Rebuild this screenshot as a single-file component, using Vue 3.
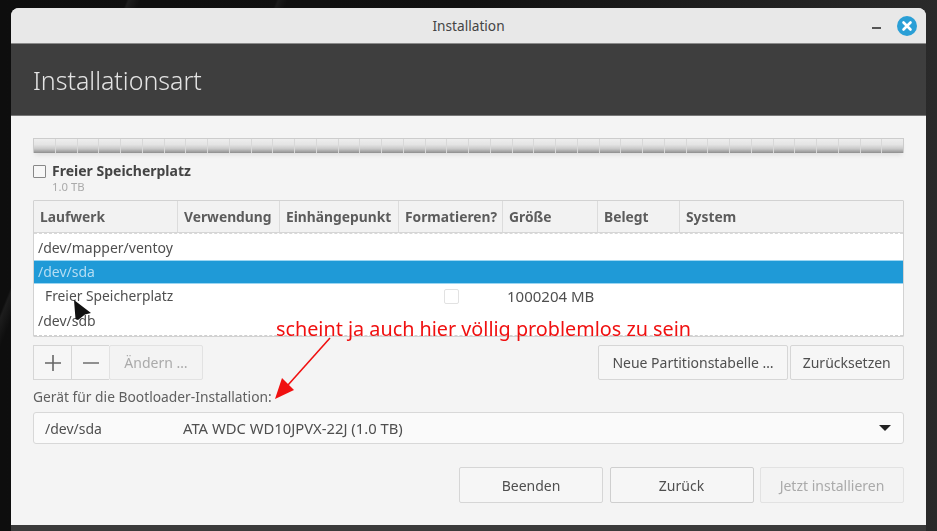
<script setup>
const cols = ['Laufwerk', 'Verwendung', 'Einhängepunkt', 'Formatieren?', 'Größe', 'Belegt', 'System']
const ticks = Array.from({ length: 40 }, (_, i) => i)
</script>

<template>
  <div class="screen">
    <div class="window">
      <header class="titlebar">
        <span class="title">Installation</span>
        <span class="minimize"></span>
        <svg class="close" viewBox="0 0 20 20" width="20" height="20">
          <circle cx="10" cy="10" r="10" fill="#2a9fd6" />
          <path d="M6.5 6.5l7 7M13.5 6.5l-7 7" stroke="#fff" stroke-width="2.6" stroke-linecap="round" />
        </svg>
      </header>
      <div class="banner">Installationsart</div>
      <main class="content">
        <div class="bar">
          <span v-for="t in ticks" :key="t" class="tick"></span>
        </div>
        <div class="legend">
          <span class="legend-box"></span>
          <div>
            <div class="legend-name">Freier Speicherplatz</div>
            <div class="legend-size">1.0 TB</div>
          </div>
        </div>
        <section class="table">
          <div class="thead">
            <div v-for="c in cols" :key="c" class="th">{{ c }}</div>
          </div>
          <div class="tbody">
            <div class="row first">/dev/mapper/ventoy</div>
            <div class="row selected">/dev/sda</div>
            <div class="row partition">
              <span class="part-name">Freier Speicherplatz</span>
              <span class="part-check"><i></i></span>
              <span class="part-size">1000204 MB</span>
            </div>
            <div class="row last">/dev/sdb</div>
          </div>
        </section>
        <div class="tools">
          <div class="group">
            <button class="btn icon">
              <svg viewBox="0 0 16 16" width="16" height="16"><path d="M8 0v16M0 8h16" stroke="#666" stroke-width="1.6" /></svg>
            </button>
            <button class="btn icon">
              <svg viewBox="0 0 16 16" width="16" height="16"><path d="M0 8h16" stroke="#777" stroke-width="1.6" /></svg>
            </button>
            <button class="btn change" disabled>Ändern …</button>
          </div>
          <div class="group right">
            <button class="btn table-new">Neue Partitionstabelle …</button>
            <button class="btn reset">Zurücksetzen</button>
          </div>
        </div>
        <div class="boot-label">Gerät für die Bootloader-Installation:</div>
        <div class="combo">
          <span class="combo-dev">/dev/sda</span>
          <span class="combo-name">ATA WDC WD10JPVX-22J (1.0 TB)</span>
          <span class="caret"></span>
        </div>
        <footer class="actions">
          <button class="btn act">Beenden</button>
          <button class="btn act back">Zurück</button>
          <button class="btn act" disabled>Jetzt installieren</button>
        </footer>
      </main>
    </div>

    <div class="note">scheint ja auch hier völlig problemlos zu sein</div>
    <svg class="arrow" viewBox="0 0 937 531" width="937" height="531">
      <path d="M330 338L288 385" stroke="#f01010" stroke-width="1.6" fill="none" />
      <path d="M275 399L282 378L294 390Z" fill="#f01010" />
    </svg>
    <svg class="cursor" viewBox="0 0 18 22" width="18" height="22">
      <path d="M0 0L17 13L11 14.5L4 20L1.5 19Z" fill="#111" />
    </svg>
  </div>
</template>

<style>
html, body { margin: 0; background: #111; }
</style>

<style scoped>
.screen {
  position: relative;
  width: 937px;
  height: 531px;
  overflow: hidden;
  box-sizing: border-box;
  padding: 8px 11px 0;
  background:
    linear-gradient(112deg, transparent 11%, #1d1d1d 11.2%, transparent 12.2%),
    linear-gradient(112deg, transparent 24%, #1a1a1a 24.2%, transparent 25%),
    linear-gradient(90deg, #0e0e0e 0%, #111 50%, #2a2a2a 100%);
  font-family: "Noto Sans", "Open Sans", sans-serif;
  font-size: 14px;
  color: #4f4f4f;
}
.window {
  width: 915px;
  height: 517px;
  border-radius: 8px 8px 0 0;
  overflow: hidden;
  background: #f4f4f4;
  display: flex;
  flex-direction: column;
  box-shadow: 0 2px 0 #3a3a3a, 0 8px 0 #3a3a3a;
  filter: blur(0.35px);
}
.titlebar {
  position: relative;
  height: 36px;
  flex: none;
  box-sizing: border-box;
  background: #e8e8e8;
  border-bottom: 1px solid #8a8a8a;
  display: flex;
  align-items: center;
  justify-content: center;
}
.title { font-size: 13.7px; color: #444; }
.minimize {
  position: absolute;
  left: 861px;
  top: 19px;
  width: 9px;
  height: 2px;
  background: #555;
}
.close { position: absolute; left: 886px; top: 8px; }
.banner {
  height: 72px;
  flex: none;
  box-sizing: border-box;
  background: #3e3e3e;
  border-bottom: 1px solid #777;
  color: #e4e4e4;
  font-size: 25px;
  font-weight: 300;
  padding: 19px 0 0 22px;
  line-height: 34px;
}
.content {
  flex: 1;
  padding: 22px 22px 0;
  display: flex;
  flex-direction: column;
}
.bar {
  height: 15px;
  box-sizing: border-box;
  display: flex;
  border: 1px solid #ccc;
  border-bottom: 0;
  background: linear-gradient(#eeeeee 0%, #e4e4e4 40%, #c8c8c8 70%, #8e8e8e 100%);
  box-shadow: 0 4px 4px -2px #ddd;
}
.tick { flex: 1; border-right: 1px solid #d8d8d8; }
.tick:last-child { border-right: 0; }
.legend {
  display: flex;
  gap: 6px;
  margin-top: 10px;
  height: 36px;
}
.legend-box {
  width: 11px;
  height: 11px;
  margin-top: 2px;
  border: 1px solid #888;
  border-radius: 1px;
  background: #f7f7f7;
}
.legend-name {
  font-weight: 700;
  font-size: 14px;
  line-height: 16px;
  color: #444;
}
.legend-size {
  font-size: 11.3px;
  line-height: 14px;
  margin-top: 1px;
  color: #aaa;
}
.table {
  height: 137px;
  margin-top: 1px;
  box-sizing: border-box;
  border: 1px solid #d2d2d2;
  border-radius: 1px;
  background: #fff;
  display: flex;
  flex-direction: column;
}
.thead {
  height: 32px;
  flex: none;
  box-sizing: border-box;
  display: grid;
  grid-template-columns: 144px 102px 119px 104px 95px 82px 1fr;
  background: #f2f2f2;
  border-bottom: 1px solid #d6d6d6;
}
.th {
  padding-left: 6px;
  line-height: 31px;
  font-weight: 700;
  font-size: 13.8px;
  color: #5c5c5c;
  border-right: 1px solid #dcdcdc;
  white-space: nowrap;
}
.th:last-child { border-right: 0; }
.tbody {
  flex: 1;
  min-height: 0;
  border-top: 1px dashed #d8d8d8;
  border-bottom: 1px dashed #d0d0d0;
}
.row {
  height: 24.5px;
  line-height: 24px;
  padding-left: 4px;
  box-sizing: border-box;
}
.first { height: 26px; line-height: 27px; }
.selected {
  height: 24px;
  line-height: 22px;
  background: #1f9ad7;
  color: #b4ddf3;
  border-top: 1px solid #9cd6f2;
  border-bottom: 1px solid #9cd6f2;
}
.partition {
  display: flex;
  align-items: center;
  padding-left: 11px;
}
.part-name { width: 399px; flex: none; font-size: 13.8px; }
.part-check { width: 63px; flex: none; }
.part-check i {
  display: block;
  width: 13px;
  height: 13px;
  border: 1px solid #e2e2e2;
  border-radius: 2px;
}
.part-size { font-size: 15px; }
.tools {
  display: flex;
  justify-content: space-between;
  margin-top: 8px;
  height: 35px;
}
.group { display: flex; }
.right { gap: 1.5px; }
.btn {
  font: inherit;
  color: #4f4f4f;
  background: #f6f6f6;
  border: 1px solid #d6d6d6;
  border-radius: 2px;
  padding: 0;
  display: flex;
  align-items: center;
  justify-content: center;
}
.btn:disabled { color: #aaa; background: #f3f3f3; border-color: #e2e2e2; }
.icon { width: 38px; border-radius: 0; border-right: 0; }
.change { width: 94px; }
.table-new { width: 190px; }
.reset { width: 114.5px; }
.boot-label {
  margin-top: 7px;
  line-height: 19px;
  font-size: 13.8px;
  color: #5f5f5f;
}
.combo {
  height: 32px;
  margin-top: 6px;
  box-sizing: border-box;
  border: 1px solid #d8d8d8;
  border-radius: 3px;
  background: #fafafa;
  display: flex;
  align-items: center;
  padding-left: 11px;
}
.combo-dev { width: 138px; }
.combo-name { flex: 1; font-size: 14.8px; }
.caret {
  width: 0;
  height: 0;
  margin-right: 12px;
  border: 6px solid transparent;
  border-top: 6px solid #222;
  border-bottom: 0;
}
.actions {
  display: flex;
  justify-content: flex-end;
  gap: 6.5px;
  margin-top: 23px;
}
.act { width: 144px; height: 36px; }
.back { border-color: #cfcfcf; }
.note {
  position: absolute;
  left: 276px;
  top: 316px;
  font-family: "Noto Sans", "Open Sans", sans-serif;
  font-size: 19.8px;
  line-height: 26px;
  color: #f01010;
  white-space: nowrap;
}
.arrow { position: absolute; left: 0; top: 0; }
.cursor { position: absolute; left: 74px; top: 300px; }
</style>
